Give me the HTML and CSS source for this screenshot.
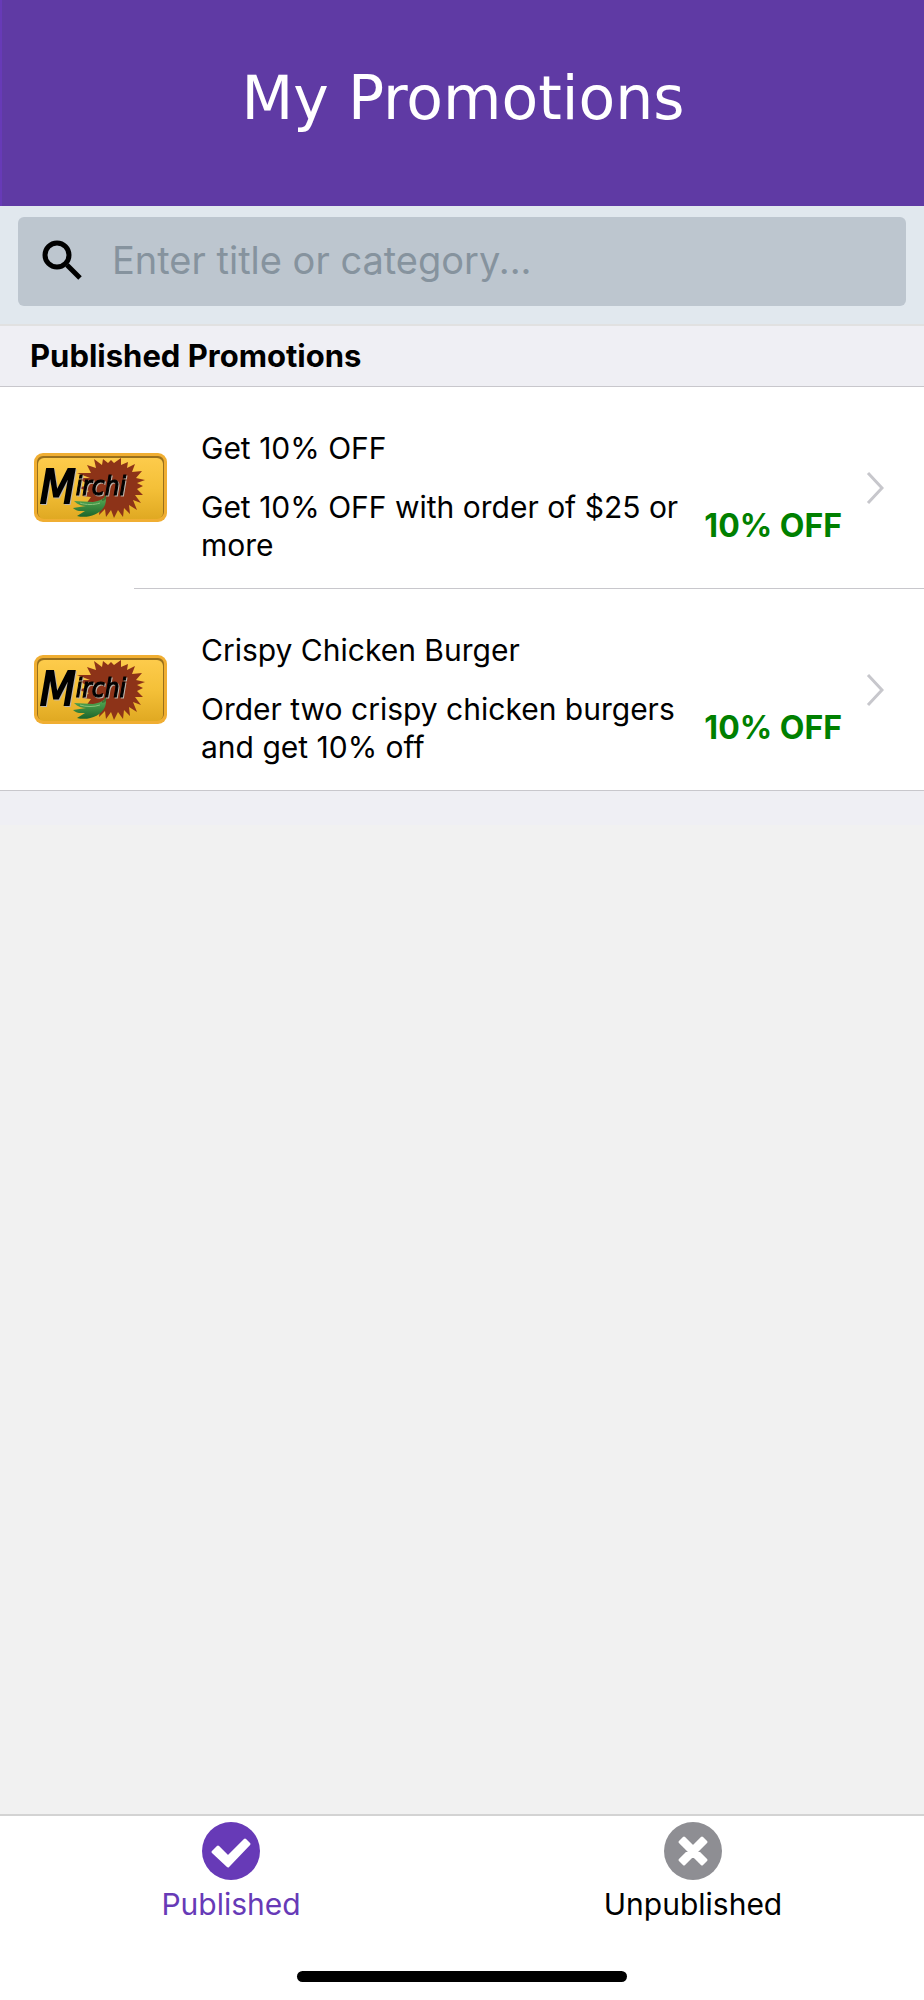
FILE: index.html
```html
<!DOCTYPE html>
<html lang="en">
<head>
    <meta charset="UTF-8">
    <meta name="viewport" content="width=device-width, initial-scale=1.0">
    <title>My Promotions</title>
    <link rel="stylesheet" href="styles.css">
</head>
<body>
    <!-- Logo background shared by the promotion rows -->
    <svg class="sprite" aria-hidden="true">
        <defs>
            <linearGradient id="gold" x1="0" y1="0" x2="0" y2="1">
                <stop offset="0" stop-color="#fdcb4b"/>
                <stop offset="0.5" stop-color="#f4c038"/>
                <stop offset="1" stop-color="#e0a922"/>
            </linearGradient>
            <linearGradient id="chili" x1="0" y1="0" x2="0" y2="1">
                <stop offset="0" stop-color="#58ad55"/>
                <stop offset="1" stop-color="#1c652b"/>
            </linearGradient>
        </defs>
        <symbol id="mirchi" viewBox="0 0 133 69">
            <rect width="133" height="69" rx="9" fill="#f0ae32"/>
            <rect x="3" y="3" width="127" height="62" rx="6" fill="#9a701b"/>
            <rect x="4" y="5" width="125" height="61" rx="6" fill="url(#gold)"/>
            <path fill="#8d3318" d="M109 33L103 36L109 42L101 42L107 50L99 47L103 57L95 52L96 61L90 55L89 64L84 57L80 65L77 57L72 64L71 56L65 62L66 53L58 57L61 49L52 51L57 44L48 43L55 38L44 35L54 32L45 25L56 25L43 20L57 20L53 12L62 15L60 6L68 12L69 6L74 10L77 7L80 10L87 5L87 12L94 9L93 15L101 11L98 19L108 18L102 25L111 27L103 30Z"/>
            <path fill="url(#chili)" d="M72 44C68 46 66 48 59 49L40 48C44 52 48 53 52 53L39 55C43 59 47 58 51 58L43 63C54 66 67 61 71 52C72 49 72 46 72 44Z"/>
            <path d="M68 47C71 47 72 45 71 43" fill="none" stroke="#3f7435" stroke-width="2"/>
            <path d="M46 50C52 52 60 52 66 50" fill="none" stroke="#8cc27a" stroke-width="1"/>
        </symbol>
    </svg>

    <header class="header">
        <h1>My Promotions</h1>
    </header>

    <form class="search" role="search">
        <label class="search-box" for="query">
            <svg class="search-icon" viewBox="0 0 40 40" role="img" aria-label="Search">
                <circle cx="15" cy="15" r="12" fill="none" stroke="#000" stroke-width="5"/>
                <path d="M25 25L38 38" stroke="#000" stroke-width="5"/>
            </svg>
            <input id="query" type="text" placeholder="Enter title or category...">
        </label>
    </form>

    <main>
        <h2 class="section-title">Published Promotions</h2>
        <ul class="promotions">
            <li>
                <a class="promotion" href="#get-10-off">
                    <svg class="logo" viewBox="0 0 133 69">
                        <use href="#mirchi"/>
                        <text class="logo-text" x="6" y="50"><tspan class="logo-capital">M</tspan><tspan y="42">irchi</tspan></text>
                    </svg>
                    <div class="info">
                        <h3>Get 10% OFF</h3>
                        <div class="details">
                            <p>Get 10% OFF with order of $25 or more</p>
                            <strong>10% OFF</strong>
                        </div>
                    </div>
                    <svg class="chevron" viewBox="0 0 18 34"><path d="M2 2L16 17L2 32"/></svg>
                </a>
            </li>
            <li>
                <a class="promotion" href="#crispy-chicken-burger">
                    <svg class="logo" viewBox="0 0 133 69">
                        <use href="#mirchi"/>
                        <text class="logo-text" x="6" y="50"><tspan class="logo-capital">M</tspan><tspan y="42">irchi</tspan></text>
                    </svg>
                    <div class="info">
                        <h3>Crispy Chicken Burger</h3>
                        <div class="details">
                            <p>Order two crispy chicken burgers and get 10% off</p>
                            <strong>10% OFF</strong>
                        </div>
                    </div>
                    <svg class="chevron" viewBox="0 0 18 34"><path d="M2 2L16 17L2 32"/></svg>
                </a>
            </li>
        </ul>
    </main>

    <footer class="footer">
        <nav class="tabs">
            <a class="tab active" href="#published">
                <svg class="tab-icon" viewBox="0 0 58 58">
                    <circle cx="29" cy="29" r="29" fill="#673ab7"/>
                    <path d="M11 30L16 25L26 35L43 18L47 22L26 44Z" fill="#fff" stroke="#fff" stroke-width="3" stroke-linejoin="round"/>
                </svg>
                Published
            </a>
            <a class="tab" href="#unpublished">
                <svg class="tab-icon" viewBox="0 0 58 58">
                    <circle cx="29" cy="29" r="29" fill="#8e8e93"/>
                    <path d="M20 16L29 25L38 16L42 20L33 29L42 38L38 42L29 33L20 42L16 38L25 29L16 20Z" fill="#fff" stroke="#fff" stroke-width="3" stroke-linejoin="round"/>
                </svg>
                Unpublished
            </a>
        </nav>
        <div class="home-bar"></div>
    </footer>
</body>
</html>
```

FILE: styles.css
```css
* {
    box-sizing: border-box;
}
body {
    margin: 0;
    min-height: 100vh;
    display: flex;
    flex-direction: column;
    font-family: Inter, "Liberation Sans", sans-serif;
    font-size: 30px;
    line-height: 38px;
    color: #000;
    background-color: #f1f1f1;
}
h1, h2, h3, p, ul {
    margin: 0;
    padding: 0;
}
a {
    color: inherit;
    text-decoration: none;
}
.sprite {
    position: absolute;
    width: 0;
    height: 0;
}

/* Header */
.header {
    padding: 62px 20px 72px;
    border-left: 2px solid #673ab7;
    background-color: #5f3aa4;
    color: #fff;
    text-align: center;
}
.header h1 {
    font-family: "DejaVu Sans", sans-serif;
    font-size: 60px;
    font-weight: normal;
    line-height: 72px;
}

/* Search */
.search {
    padding: 11px 18px 18px;
    background-color: #e1e8ee;
    border-bottom: 2px solid #e1e1e1;
}
.search-box {
    display: flex;
    align-items: center;
    gap: 30px;
    height: 89px;
    padding: 0 24px 3px;
    border-radius: 6px;
    background-color: #bdc6cf;
}
.search-icon {
    width: 40px;
    height: 40px;
}
.search-box input {
    flex: 1;
    min-width: 0;
    padding: 0;
    border: none;
    outline: none;
    background: none;
    font-family: inherit;
    font-size: 38px;
}
.search-box input::placeholder {
    color: #86939e;
    opacity: 1;
}

/* Promotions list */
.section-title {
    padding: 11px 30px;
    border-bottom: 1px solid #c8c7cc;
    background-color: #efeff4;
    font-size: 31px;
    font-weight: 700;
}
.promotions {
    list-style: none;
    background-color: #fff;
    border-bottom: 34px solid #efeff4;
}
.promotions li + li::before {
    content: "";
    display: block;
    height: 1px;
    margin-left: 134px;
    background-color: #c8c7cc;
}
.promotions li:last-child {
    border-bottom: 1px solid #c8c7cc;
}
.promotion {
    display: flex;
    align-items: center;
    padding: 42px 40px 24px 34px;
}
.logo {
    flex: none;
    width: 133px;
    height: 69px;
    margin-bottom: 18px;
}
.logo-text {
    font-family: "DejaVu Sans Condensed", "DejaVu Sans", sans-serif;
    font-size: 26px;
    font-style: italic;
    fill: #000;
    stroke: #000;
    stroke-width: 1;
    filter: drop-shadow(1px 1px 0 #bcb6ad);
}
.logo-capital {
    font-size: 46px;
    stroke-width: 2;
}
.info {
    flex: 1;
    margin: 0 24px 0 34px;
}
.info h3 {
    margin-bottom: 21px;
    font-size: 30px;
    font-weight: normal;
}
.details {
    display: flex;
    align-items: center;
    gap: 16px;
}
.details p {
    flex: 1;
}
.details strong {
    font-size: 32px;
    font-weight: 700;
    color: #008000;
    white-space: nowrap;
}
.chevron {
    flex: none;
    width: 18px;
    height: 34px;
    margin-bottom: 18px;
    fill: none;
    stroke: #c7c7cc;
    stroke-width: 3;
}

/* Bottom tabs */
.footer {
    margin-top: auto;
    padding-bottom: 18px;
    border-top: 2px solid #d3d3d3;
    background-color: #fff;
}
.tabs {
    display: flex;
}
.tab {
    flex: 1;
    display: flex;
    flex-direction: column;
    align-items: center;
    gap: 5px;
    padding: 6px 0 48px;
}
.tab.active {
    color: #673ab7;
}
.tab-icon {
    width: 58px;
    height: 58px;
}
.home-bar {
    width: 330px;
    height: 11px;
    margin: 0 auto;
    border-radius: 6px;
    background-color: #000;
}
```
